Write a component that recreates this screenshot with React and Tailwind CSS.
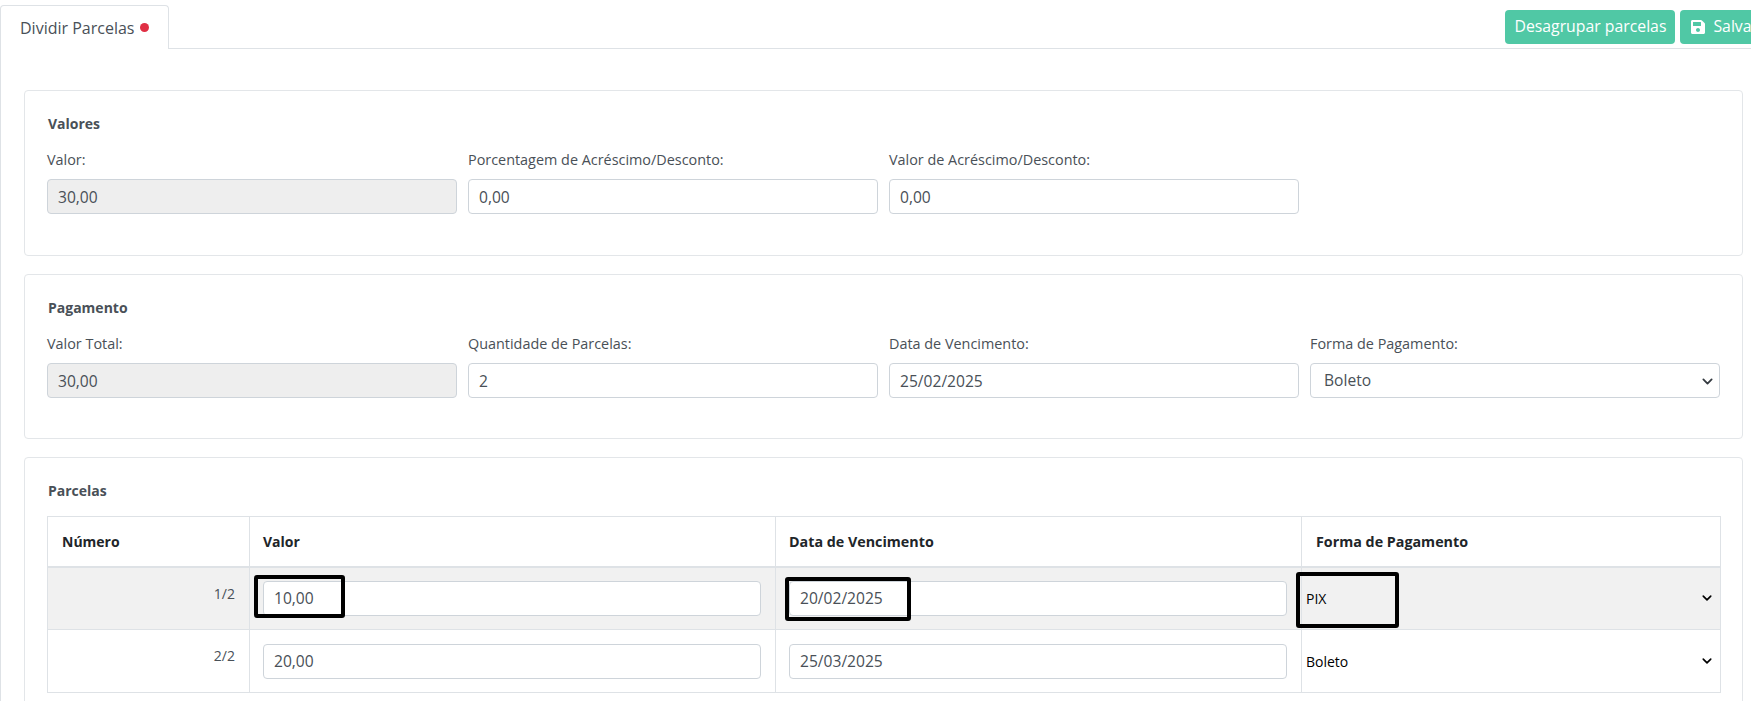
import React from 'react';
import { FaSave } from 'react-icons/fa';

const font = { fontFamily: '"Open Sans", sans-serif' };

const Chevron = ({ className }) => (
  <svg viewBox="0 0 16 16" className={className} fill="none">
    <path d="M2 5l6 6 6-6" stroke="currentColor" strokeWidth="2.6" strokeLinecap="round" strokeLinejoin="round" />
  </svg>
);

const Field = ({ label, value, disabled }) => (
  <div className="flex flex-col">
    <label className="text-[14.4px] leading-[18px] text-[#495057] mb-[10px]">{label}</label>
    <input
      readOnly
      value={value}
      className={`h-[35px] w-full rounded-[4px] border border-[#ced4da] px-[10px] text-[15.6px] text-[#495057] outline-none ${disabled ? 'bg-[#eeeeee]' : 'bg-white'}`}
    />
  </div>
);

const SelectField = ({ label, value }) => (
  <div className="flex flex-col">
    <label className="text-[14.4px] leading-[18px] text-[#495057] mb-[10px]">{label}</label>
    <div className="relative">
      <select
        defaultValue={value}
        className="h-[35px] w-full appearance-none rounded-[4px] border border-[#ced4da] bg-white pl-[13px] text-[15.6px] text-[#495057] outline-none"
      >
        <option>Boleto</option>
        <option>PIX</option>
      </select>
      <Chevron className="absolute right-[7px] top-[13px] w-[11px] h-[11px] text-[#343a40] pointer-events-none" />
    </div>
  </div>
);

const Card = ({ title, children, className }) => (
  <section className={`rounded-[4px] border border-[#e3e6e9] bg-white px-[22px] pt-[24px] ${className}`}>
    <h3 className="pl-[1px] text-[14px] leading-[18px] font-bold text-[#495057] mb-[18px]">{title}</h3>
    {children}
  </section>
);

const Mark = ({ className }) => (
  <div className={`absolute border-[4px] border-black rounded-[3px] pointer-events-none ${className}`} />
);

const TableInput = ({ value }) => (
  <input
    readOnly
    value={value}
    className="block h-[35px] w-full rounded-[4px] border border-[#ced4da] bg-white px-[10px] text-[15.6px] text-[#495057] outline-none"
  />
);

const TableSelect = ({ value }) => (
  <div className="relative h-[35px]">
    <select
      defaultValue={value}
      className="h-[35px] w-full appearance-none bg-transparent pt-[1px] text-[14px] text-black outline-none"
    >
      <option>Boleto</option>
      <option>PIX</option>
    </select>
    <Chevron className="absolute right-[4px] top-[12px] w-[10px] h-[10px] text-black pointer-events-none" />
  </div>
);

export default function App() {
  return (
    <div style={font} className="w-[1751px] h-[701px] overflow-hidden bg-white">
      {/* Tabs + actions */}
      <div className="flex justify-between h-[49px] pt-[5px] mr-[-17px] border-b border-[#dee2e6]">
        <div className="flex items-center gap-[6px] w-[169px] h-[44px] pl-[19px] rounded-t-[4px] border border-b-0 border-[#dee2e6] bg-white">
          <span className="text-[16px] text-[#495057]">Dividir Parcelas</span>
          <span className="w-[9px] h-[9px] rounded-full bg-[#e02f44]" />
        </div>
        <div className="flex gap-[5px] h-[34px] mt-[5px]">
          <button className="h-[34px] px-[9px] rounded-[4px] bg-[#50c8a5] text-[15.8px] text-white">Desagrupar parcelas</button>
          <button className="flex items-center gap-[7px] h-[34px] px-[10px] rounded-[4px] bg-[#50c8a5] text-[15.8px] text-white">
            <FaSave className="w-[16px] h-[16px]" />
            Salvar
          </button>
        </div>
      </div>

      <div className="border-l border-[#dee2e6] h-[652px] pl-[23px] pr-[8px] pt-[41px] flex flex-col gap-[18px]">
        <Card title="Valores" className="h-[166px] shrink-0">
          <div className="grid grid-cols-4 gap-[11px]">
            <Field label="Valor:" value="30,00" disabled />
            <Field label="Porcentagem de Acréscimo/Desconto:" value="0,00" />
            <Field label="Valor de Acréscimo/Desconto:" value="0,00" />
          </div>
        </Card>

        <Card title="Pagamento" className="h-[165px] shrink-0">
          <div className="grid grid-cols-4 gap-[11px]">
            <Field label="Valor Total:" value="30,00" disabled />
            <Field label="Quantidade de Parcelas:" value="2" />
            <Field label="Data de Vencimento:" value="25/02/2025" />
            <SelectField label="Forma de Pagamento:" value="Boleto" />
          </div>
        </Card>

        <Card title="Parcelas" className="h-[260px] shrink-0">
          <table className="w-[1673px] -mt-[2px] table-fixed border-collapse border border-[#dee2e6] text-[14px]">
            <colgroup>
              <col className="w-[202px]" />
              <col className="w-[526px]" />
              <col className="w-[526px]" />
              <col className="w-[419px]" />
            </colgroup>
            <thead>
              <tr className="h-[50px] border-b-2 border-[#dee2e6] text-left font-bold text-[#212529]">
                <th className="border-r border-[#dee2e6] pl-[14px]">Número</th>
                <th className="border-r border-[#dee2e6] pl-[13px]">Valor</th>
                <th className="border-r border-[#dee2e6] pl-[13px] text-[14.3px]">Data de Vencimento</th>
                <th className="pl-[14px] text-[14.3px]">Forma de Pagamento</th>
              </tr>
            </thead>
            <tbody>
              <tr className="h-[63px] border-b border-[#dee2e6] bg-[#f1f1f1]">
                <td className="border-r border-[#dee2e6] pr-[14px] pt-[15px] align-top text-right text-[#495057]">1/2</td>
                <td className="border-r border-[#dee2e6] pl-[13px] pr-[14px]">
                  <div className="relative">
                    <TableInput value="10,00" />
                    <Mark className="left-[-9px] top-[-6px] w-[91px] h-[43px]" />
                  </div>
                </td>
                <td className="border-r border-[#dee2e6] pl-[13px] pr-[14px]">
                  <div className="relative">
                    <TableInput value="20/02/2025" />
                    <Mark className="left-[-4px] top-[-4px] w-[126px] h-[44px]" />
                  </div>
                </td>
                <td className="pl-[4px] pr-[4px]">
                  <div className="relative">
                    <TableSelect value="PIX" />
                    <Mark className="left-[-10px] top-[-9px] w-[103px] h-[56px]" />
                  </div>
                </td>
              </tr>
              <tr className="h-[63px] bg-white">
                <td className="border-r border-[#dee2e6] pr-[14px] pt-[15px] align-top text-right text-[#495057]">2/2</td>
                <td className="border-r border-[#dee2e6] pl-[13px] pr-[14px]"><TableInput value="20,00" /></td>
                <td className="border-r border-[#dee2e6] pl-[13px] pr-[14px]"><TableInput value="25/03/2025" /></td>
                <td className="pl-[4px] pr-[4px]"><TableSelect value="Boleto" /></td>
              </tr>
            </tbody>
          </table>
        </Card>
      </div>
    </div>
  );
}
